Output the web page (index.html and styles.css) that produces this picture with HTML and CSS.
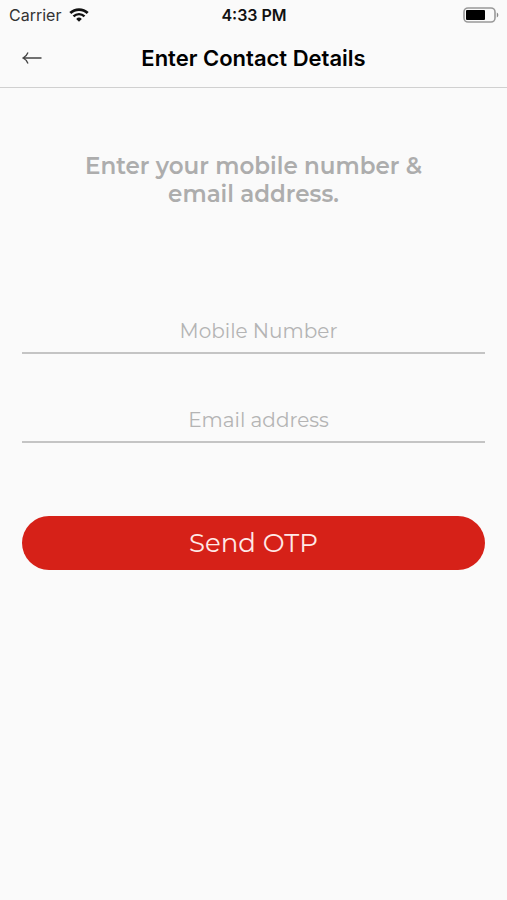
FILE: index.html
```html
<!DOCTYPE html>
<html lang="en">
<head>
<meta charset="utf-8">
<meta name="viewport" content="width=device-width, initial-scale=1">
<title>Enter Contact Details</title>
<link rel="stylesheet" href="styles.css">
</head>
<body>
<div class="status">
  <div class="carrier">
    <span>Carrier</span>
    <svg class="wifi" viewBox="0 0 20 14" aria-hidden="true">
      <path d="M1.300 5.100a12.400 12.400 0 0 1 17.400 0" fill="none" stroke="#111" stroke-width="2.8"/>
      <path d="M4.500 8.400a7.800 7.800 0 0 1 11 0" fill="none" stroke="#111" stroke-width="2.4"/>
      <path d="M7.200 10.900a4 4 0 0 1 5.600 0L10 13.800z" fill="#111"/>
    </svg>
  </div>
  <time class="clock">4:33 PM</time>
  <svg class="battery" viewBox="0 0 36 16" aria-hidden="true">
    <rect x="1" y="1" width="31" height="14" rx="4" fill="none" stroke="#999" stroke-width="1.6"/>
    <rect x="3" y="3" width="19" height="10" rx="1" fill="#000"/>
    <path d="M33.800 5.500c2 .8 2 4.200 0 5z" fill="#888"/>
  </svg>
</div>
<header class="nav">
  <button class="back" type="button" aria-label="Back">
    <svg viewBox="0 0 20 14" aria-hidden="true">
      <path d="M19.500 7H1M6 1.500Q4.500 5.500 1 7Q4.500 8.500 6 12.500" fill="none" stroke="#444" stroke-width="1.3"/>
    </svg>
  </button>
  <h1 class="title">Enter Contact Details</h1>
</header>
<main class="content">
  <p class="intro">Enter your mobile number &amp; email address.</p>
  <form class="form">
    <input class="field" type="tel" aria-label="Mobile Number" placeholder="Mobile Number">
    <input class="field" type="email" aria-label="Email address" placeholder="Email address">
    <button class="send" type="submit">Send OTP</button>
  </form>
</main>
</body>
</html>
```

FILE: styles.css
```css
* {
  box-sizing: border-box;
}

body {
  margin: 0;
  min-height: 100vh;
  background: #fafafa;
  color: #111;
  font-family: Inter, "Liberation Sans", sans-serif;
}

.status {
  display: grid;
  grid-template-columns: 1fr auto 1fr;
  align-items: center;
  height: 28px;
  padding: 2px 8px 0 9px;
  font-size: 16px;
  line-height: 20px;
}

.carrier {
  display: flex;
  align-items: center;
  gap: 8px;
  color: #333;
}

.wifi {
  width: 20px;
  height: 14px;
}

.clock {
  font-weight: 600;
}

.battery {
  width: 36px;
  height: 16px;
  justify-self: end;
}

.nav {
  display: grid;
  grid-template-columns: 64px 1fr 64px;
  align-items: center;
  height: 60px;
  border-bottom: 1px solid #d0d0d0;
}

.back {
  display: flex;
  align-items: center;
  height: 44px;
  padding: 0 22px;
  border: 0;
  background: none;
}

.back svg {
  width: 20px;
  height: 14px;
}

.title {
  margin: 0;
  color: #000;
  font-size: 22px;
  font-weight: 600;
  line-height: 28px;
  text-align: center;
}

.content {
  padding: 64px 22px 0;
}

.intro {
  max-width: 360px;
  margin: 0 auto 100px;
  color: #adadad;
  font-family: Montserrat, Inter, sans-serif;
  font-size: 23px;
  font-weight: 600;
  line-height: 28px;
  text-align: center;
}

.form {
  display: flex;
  flex-direction: column;
  font-family: Montserrat, Inter, sans-serif;
}

.field {
  width: 100%;
  height: 46px;
  margin-bottom: 43px;
  padding: 2px 0 0 10px;
  border: 0;
  border-bottom: 2px solid #c4c4c4;
  border-radius: 0;
  outline: 0;
  background: none;
  color: #333;
  font-family: inherit;
  font-size: 20px;
  text-align: center;
}

.field::placeholder {
  color: #b4b4b4;
  opacity: 1;
}

.send {
  height: 54px;
  margin-top: 30px;
  border: 0;
  border-radius: 27px;
  background: #d62118;
  color: #ffe9e7;
  font-family: inherit;
  font-size: 26px;
}
```
